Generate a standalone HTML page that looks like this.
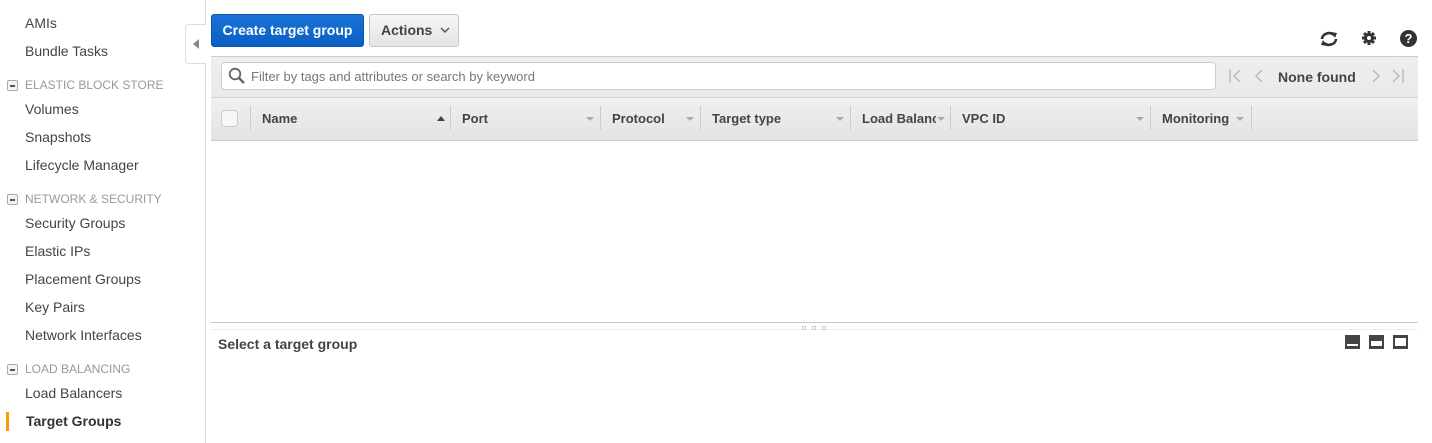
<!DOCTYPE html>
<html><head><style>
*{margin:0;padding:0;box-sizing:border-box}
body{width:1432px;height:443px;overflow:hidden;background:#fff;font-family:"Liberation Sans",Arial,sans-serif;position:relative;color:#333}
.a{position:absolute;white-space:nowrap}
.s{font-size:14px;color:#444;left:25px}
.h{font-size:12px;color:#999;left:25px}
.mb{position:absolute;left:7px;width:11px;height:11px;border:1px solid #aaa;border-radius:2px;background:#f4f4f4}
.mb:after{content:"";position:absolute;left:2px;top:4px;width:5px;height:2px;background:#555}
.col{position:absolute;top:106px;height:24px;width:1px;background:#ccc}
.ct{position:absolute;top:111px;font-size:13px;font-weight:bold;color:#444;white-space:nowrap}
.dd{position:absolute;top:117px;width:0;height:0;border-left:4px solid transparent;border-right:4px solid transparent;border-top:4px solid #aaa}
</style></head><body>
<div class="a s" style="top:15px">AMIs</div>
<div class="a s" style="top:43px">Bundle Tasks</div>
<div class="mb" style="top:80px"></div><div class="a h" style="top:78px">ELASTIC BLOCK STORE</div>
<div class="a s" style="top:101px">Volumes</div>
<div class="a s" style="top:129px">Snapshots</div>
<div class="a s" style="top:157px">Lifecycle Manager</div>
<div class="mb" style="top:194px"></div><div class="a h" style="top:192px">NETWORK &amp; SECURITY</div>
<div class="a s" style="top:215px">Security Groups</div>
<div class="a s" style="top:243px">Elastic IPs</div>
<div class="a s" style="top:271px">Placement Groups</div>
<div class="a s" style="top:299px">Key Pairs</div>
<div class="a s" style="top:327px">Network Interfaces</div>
<div class="mb" style="top:364px"></div><div class="a h" style="top:362px">LOAD BALANCING</div>
<div class="a s" style="top:385px">Load Balancers</div>
<div class="a s" style="top:413px;left:26px;font-weight:bold;color:#333">Target Groups</div>
<div class="a" style="left:6px;top:412px;width:3px;height:19px;background:#f90"></div>
<div class="a" style="left:205px;top:0;width:1px;height:443px;background:#ddd"></div>
<div class="a" style="left:185px;top:24px;width:21px;height:40px;background:#fff;border:1px solid #ddd;border-right:none;border-radius:4px 0 0 4px"></div>
<div class="a" style="left:193px;top:39px;border-top:5px solid transparent;border-bottom:5px solid transparent;border-right:6px solid #888"></div>

<div class="a" style="left:211px;top:14px;width:153px;height:33px;background:linear-gradient(#1a73d9,#0a5fc2);border:1px solid #0a56b0;border-radius:3px;color:#fff;font-size:14px;font-weight:bold;text-align:center;line-height:31px">Create target group</div>
<div class="a" style="left:369px;top:14px;width:90px;height:33px;background:linear-gradient(#f6f6f6,#e4e4e4);border:1px solid #c6c6c6;border-radius:3px;color:#444;font-size:14px;font-weight:bold;line-height:31px;padding-left:11px">Actions <svg width="10" height="7" style="margin-left:4px;vertical-align:1px"><path d="M1 1l4 4 4-4" stroke="#555" stroke-width="1.5" fill="none"/></svg></div>

<svg class="a" style="left:1318px;top:30px" width="22" height="18" viewBox="0 0 22 18"><path d="M4 9a7 6 0 0 1 12-4" stroke="#333" stroke-width="2.6" fill="none"/><path d="M13 2l6 1-2 5z" fill="#333"/><path d="M18 9a7 6 0 0 1-12 4" stroke="#333" stroke-width="2.6" fill="none"/><path d="M9 16l-6-1 2-5z" fill="#333"/></svg>
<svg class="a" style="left:1361px;top:30px" width="16" height="16" viewBox="0 0 16 16"><g fill="#333"><circle cx="8" cy="8" r="5"/><rect x="6.5" y="1" width="3" height="14"/><rect x="1" y="6.5" width="14" height="3"/><rect x="6.5" y="1" width="3" height="14" transform="rotate(45 8 8)"/><rect x="6.5" y="1" width="3" height="14" transform="rotate(-45 8 8)"/></g><circle cx="8" cy="8" r="2" fill="#fff"/></svg>
<div class="a" style="left:1400px;top:30px;width:17px;height:17px;border-radius:50%;background:#333;color:#fff;font-size:13px;font-weight:bold;text-align:center;line-height:17px">?</div>

<div class="a" style="left:211px;top:56px;width:1207px;height:85px;background:linear-gradient(#eee,#e6e6e6);border-top:1px solid #ccc;border-bottom:1px solid #ccc"></div>
<div class="a" style="left:211px;top:97px;width:1207px;height:1px;background:#d4d4d4"></div>
<div class="a" style="left:211px;top:98px;width:1207px;height:42px;background:linear-gradient(#f0f0f0,#e3e3e3)"></div>
<div class="a" style="left:221px;top:62px;width:995px;height:28px;background:#fff;border:1px solid #ccc;border-radius:4px"></div>
<svg class="a" style="left:228px;top:67px" width="18" height="18" viewBox="0 0 18 18"><circle cx="7" cy="7" r="5.3" stroke="#666" stroke-width="1.8" fill="none"/><path d="M11 11l5 5" stroke="#666" stroke-width="2.4"/></svg>
<div class="a" style="left:251px;top:69px;font-size:13px;color:#777">Filter by tags and attributes or search by keyword</div>
<svg class="a" style="left:1228px;top:68px" width="40" height="16" viewBox="0 0 40 16"><g stroke="#bbb" stroke-width="1.5" fill="none"><path d="M2 1v14M12 2l-6 6 6 6M34 2l-6 6 6 6"/></g></svg>
<div class="a" style="left:1278px;top:69px;font-size:14px;font-weight:bold;color:#444">None found</div>
<svg class="a" style="left:1368px;top:68px" width="40" height="16" viewBox="0 0 40 16"><g stroke="#bbb" stroke-width="1.5" fill="none"><path d="M5 2l6 6-6 6M25 2l6 6-6 6M35 1v14"/></g></svg>

<div class="a" style="left:221px;top:110px;width:17px;height:17px;border:1px solid #ccc;border-radius:4px;background:#f7f7f7"></div>
<div class="col" style="left:250px"></div><div class="col" style="left:450px"></div><div class="col" style="left:600px"></div><div class="col" style="left:700px"></div><div class="col" style="left:850px"></div><div class="col" style="left:950px"></div><div class="col" style="left:1150px"></div><div class="col" style="left:1251px"></div>
<div class="ct" style="left:262px">Name</div><div class="a" style="left:437px;top:116px;border-left:4px solid transparent;border-right:4px solid transparent;border-bottom:5px solid #444"></div>
<div class="ct" style="left:462px">Port</div><div class="dd" style="left:586px"></div>
<div class="ct" style="left:612px">Protocol</div><div class="dd" style="left:686px"></div>
<div class="ct" style="left:712px">Target type</div><div class="dd" style="left:836px"></div>
<div class="ct" style="left:862px;width:74px;overflow:hidden">Load Balancer</div><div class="dd" style="left:937px"></div>
<div class="ct" style="left:962px">VPC ID</div><div class="dd" style="left:1136px"></div>
<div class="ct" style="left:1162px">Monitoring</div><div class="dd" style="left:1236px"></div>

<div class="a" style="left:211px;top:322px;width:1207px;height:1px;background:#c8c8c8"></div>
<div class="a" style="left:211px;top:329px;width:1207px;height:1px;background:#eee"></div>
<div class="a" style="left:802px;top:326px;width:4px;height:4px;border:1px solid #ccc"></div>
<div class="a" style="left:812px;top:326px;width:4px;height:4px;border:1px solid #ccc"></div>
<div class="a" style="left:822px;top:326px;width:4px;height:4px;border:1px solid #ccc"></div>
<div class="a" style="left:218px;top:336px;font-size:14px;font-weight:bold;color:#444">Select a target group</div>
<div class="a" style="left:1345px;top:335px;width:15px;height:14px;background:#444"><div style="position:absolute;left:2px;top:9px;width:11px;height:2px;background:#fff"></div></div>
<div class="a" style="left:1369px;top:335px;width:15px;height:14px;background:#444"><div style="position:absolute;left:2px;top:6px;width:11px;height:5px;background:#fff"></div></div>
<div class="a" style="left:1393px;top:335px;width:15px;height:14px;background:#444"><div style="position:absolute;left:2px;top:3px;width:11px;height:8px;background:#fff"></div></div>
</body></html>
